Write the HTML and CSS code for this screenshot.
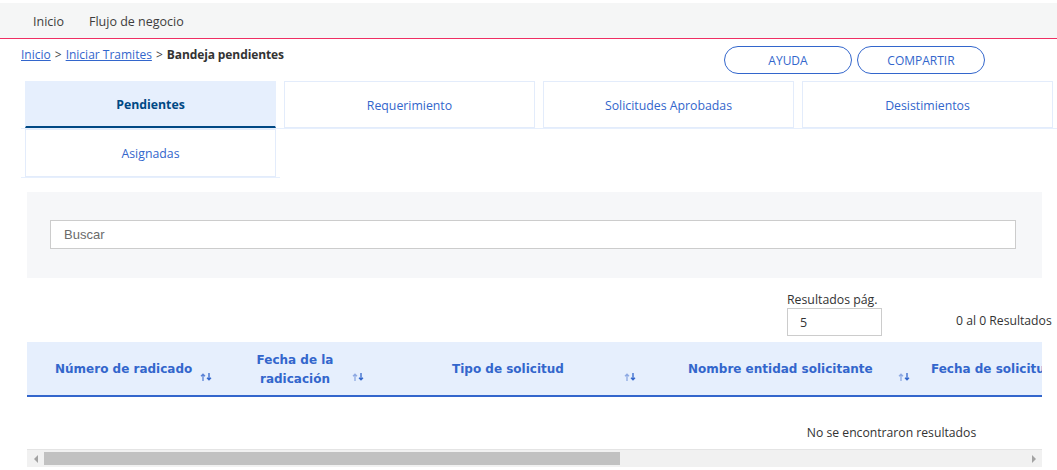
FILE: index.html
```html
<!DOCTYPE html>
<html lang="es">
<head>
<meta charset="utf-8">
<title>Bandeja pendientes</title>
<link rel="stylesheet" href="styles.css">
</head>
<body>
<nav class="topnav">
  <a class="topnav-item">Inicio</a>
  <a class="topnav-item">Flujo de negocio</a>
</nav>

<div class="headrow">
  <div class="crumbs">
    <a class="crumb-link" href="#">Inicio</a><span class="crumb-sep">&gt;</span><a class="crumb-link" href="#">Iniciar Tramites</a><span class="crumb-sep">&gt;</span><span class="crumb-current">Bandeja pendientes</span>
  </div>
  <div class="btns">
    <button class="pill">AYUDA</button>
    <button class="pill">COMPARTIR</button>
  </div>
</div>

<ul class="tabs">
  <li class="tab-li"><a class="tab tab-active">Pendientes</a></li>
  <li class="tab-li"><a class="tab">Requerimiento</a></li>
  <li class="tab-li"><a class="tab">Solicitudes Aprobadas</a></li>
  <li class="tab-li"><a class="tab">Desistimientos</a></li>
  <li class="tab-li"><a class="tab">Asignadas</a></li>
</ul>

<section class="search-panel">
  <input class="search-input" type="text" placeholder="Buscar">
</section>

<div class="results-row">
  <label class="per-page">
    <span class="per-page-label">Resultados pág.</span>
    <input class="per-page-input" type="text" value="5">
  </label>
  <span class="count">0 al 0 Resultados</span>
</div>

<div class="table-wrap">
  <div class="tscroll">
    <table class="grid">
      <colgroup>
        <col class="w1"><col class="w2"><col class="w3"><col class="w4"><col class="w5"><col class="w6"><col class="w7">
      </colgroup>
      <thead>
        <tr>
          <th class="c1"><div class="th-in"><span class="lbl">Número de radicado</span><svg class="sort sort-1" width="13" height="8" viewBox="0 0 13 8"><path class="up" d="M3 8V1.2M1 3.2L3 1.2L5 3.2"/><path class="down" d="M9 0V6.8M7 4.8L9 6.8L11 4.8"/></svg></div></th>
          <th class="c2"><div class="th-in"><span class="lbl lbl-2">Fecha de la<br>radicación</span><svg class="sort" width="13" height="8" viewBox="0 0 13 8"><path class="up" d="M3 8V1.2M1 3.2L3 1.2L5 3.2"/><path class="down" d="M9 0V6.8M7 4.8L9 6.8L11 4.8"/></svg></div></th>
          <th class="c3"><div class="th-in"><span class="lbl">Tipo de solicitud</span><svg class="sort" width="13" height="8" viewBox="0 0 13 8"><path class="up" d="M3 8V1.2M1 3.2L3 1.2L5 3.2"/><path class="down" d="M9 0V6.8M7 4.8L9 6.8L11 4.8"/></svg></div></th>
          <th class="c4"><div class="th-in"><span class="lbl">Nombre entidad solicitante</span><svg class="sort" width="13" height="8" viewBox="0 0 13 8"><path class="up" d="M3 8V1.2M1 3.2L3 1.2L5 3.2"/><path class="down" d="M9 0V6.8M7 4.8L9 6.8L11 4.8"/></svg></div></th>
          <th class="c5"><div class="th-in"><span class="lbl">Fecha de solicitud</span><svg class="sort" width="13" height="8" viewBox="0 0 13 8"><path class="up" d="M3 8V1.2M1 3.2L3 1.2L5 3.2"/><path class="down" d="M9 0V6.8M7 4.8L9 6.8L11 4.8"/></svg></div></th>
          <th class="c6"><div class="th-in"><span class="lbl">Estado</span><svg class="sort" width="13" height="8" viewBox="0 0 13 8"><path class="up" d="M3 8V1.2M1 3.2L3 1.2L5 3.2"/><path class="down" d="M9 0V6.8M7 4.8L9 6.8L11 4.8"/></svg></div></th>
          <th class="c7"><div class="th-in"><span class="lbl">Acciones</span></div></th>
        </tr>
      </thead>
      <tbody>
        <tr>
          <td class="empty" colspan="7">No se encontraron resultados</td>
        </tr>
      </tbody>
    </table>
  </div>
  <div class="hscroll">
    <span class="hs-btn"><span class="arrow-left"></span></span>
    <span class="hs-track"><span class="hs-thumb"></span></span>
    <span class="hs-btn"><span class="arrow-right"></span></span>
  </div>
</div>
</body>
</html>
```

FILE: styles.css
```css
* { box-sizing: border-box; }

html, body {
  margin: 0;
  padding: 0;
  background: #ffffff;
  overflow: hidden;
}

body {
  font-family: "Open Sans", "Noto Sans", sans-serif;
  font-size: 12.5px;
  color: #333333;
  width: 1057px;
  height: 470px;
}

/* ---------- top nav ---------- */
.topnav {
  margin-top: 3px;
  height: 36px;
  background: #f5f6f6;
  border-bottom: 1px solid #ef2f63;
  display: flex;
  align-items: center;
  gap: 25px;
  padding-left: 33px;
  padding-top: 1px;
}

.topnav-item {
  color: #3d3d3d;
  font-size: 12.5px;
  text-decoration: none;
}

/* ---------- breadcrumb row ---------- */
.headrow {
  display: flex;
  align-items: flex-start;
  height: 42px;
  padding-left: 21px;
}

.crumbs {
  padding-top: 8px;
  line-height: 16px;
  font-size: 12px;
}

.crumb-link {
  color: #3366cc;
  text-decoration: underline;
}

.crumb-sep {
  color: #444;
  margin: 0 4px;
}

.crumb-current {
  font-weight: 700;
  color: #333333;
  letter-spacing: -0.1px;
}

.btns {
  margin-left: auto;
  margin-right: 72px;
  margin-top: 7px;
  display: flex;
  gap: 5px;
}

.pill {
  width: 128px;
  height: 28px;
  border: 1px solid #3366cc;
  border-radius: 14px;
  background: #ffffff;
  color: #3366cc;
  font-family: "Open Sans", "Noto Sans", sans-serif;
  font-size: 12px;
  padding: 0;
}

/* ---------- tabs ---------- */
.tabs {
  list-style: none;
  margin: 0 0 0 21px;
  padding: 0;
  width: 1036px;
  display: flex;
  flex-wrap: wrap;
}

.tab-li {
  flex: 0 0 25%;
  padding: 0 4px;
  border-bottom: 1px solid #e6effd;
}

.tab {
  display: flex;
  align-items: center;
  justify-content: center;
  height: 47px;
  padding-top: 1px;
  border: 1px solid #e3ecfb;
  color: #3366cc;
  font-size: 12.3px;
  background: #ffffff;
}

.tab-active {
  background: #e6effd;
  border-color: #e6effd;
  border-bottom: 2px solid #004884;
  color: #004884;
  font-weight: 700;
}

.tab-li:nth-child(5) .tab {
  height: 48px;
}

/* ---------- search ---------- */
.search-panel {
  margin: 14px 15px 0 27px;
  background: #f6f7f9;
  padding: 28px 26px 29px 23px;
}

.search-input {
  display: block;
  width: 100%;
  height: 29px;
  border: 1px solid #cccccc;
  background: #ffffff;
  padding: 0 13px;
  font-family: "Liberation Sans", Arial, sans-serif;
  font-size: 13px;
  color: #333;
  outline: none;
}

.search-input::placeholder {
  color: #6b6b6b;
}

/* ---------- results row ---------- */
.results-row {
  display: flex;
  align-items: flex-end;
  height: 64px;
  padding-bottom: 6px;
  padding-left: 787px;
}

.per-page {
  display: flex;
  flex-direction: column;
  width: 104px;
}

.per-page-label {
  font-size: 12.3px;
  line-height: 17px;
  padding-top: 1px;
  color: #333;
  white-space: nowrap;
}

.per-page-input {
  width: 95px;
  height: 28px;
  border: 1px solid #cccccc;
  padding: 0 12px;
  font-family: "Open Sans", "Noto Sans", sans-serif;
  font-size: 12.5px;
  color: #333;
  outline: none;
}

.count {
  margin-left: 65px;
  margin-bottom: 7px;
  font-size: 12.2px;
  color: #333;
  white-space: nowrap;
}

/* ---------- table ---------- */
.table-wrap {
  margin: 0 15px 0 27px;
}

.tscroll {
  overflow: hidden;
}

.grid {
  width: 1729px;
  table-layout: fixed;
  border-collapse: collapse;
}

.w1 { width: 206px; }
.w2 { width: 175px; }
.w3 { width: 250px; }
.w4 { width: 257px; }
.w5 { width: 260px; }
.w6 { width: 290px; }
.w7 { width: 291px; }

.grid th {
  height: 54px;
  padding: 0;
  background: #e6effd;
  border-bottom: 2px solid #3366cc;
  font-family: "DejaVu Sans", "Liberation Sans", sans-serif;
  font-size: 12px;
  font-weight: 700;
  color: #3366cc;
  text-align: left;
  vertical-align: middle;
  white-space: nowrap;
}

.th-in {
  display: flex;
  align-items: center;
  padding-top: 2px;
}

.lbl {
  line-height: 19px;
}

.lbl-2 {
  width: 100px;
  text-align: center;
}

.sort {
  flex: 0 0 auto;
  margin-top: 14px;
  fill: none;
  stroke-width: 1.3;
}

.sort .up { stroke: #8ea9e3; }
.sort .down { stroke: #3366cc; }
.sort-1 .up { stroke: #5a82d6; }

.c1 .th-in { padding-left: 28px; }
.c1 .sort { margin-left: 8px; }

.c2 .th-in { padding-left: 12px; }
.c2 .sort { margin-left: 7px; }

.c3 .th-in { padding-left: 44px; }
.c3 .sort { margin-left: 60px; }

.c4 .th-in { padding-left: 30px; }
.c4 .sort { margin-left: 25px; }

.c5 .th-in { padding-left: 16px; }
.c5 .sort { margin-left: 20px; }

.c6 .th-in { padding-left: 40px; }
.c6 .sort { margin-left: 20px; }

.c7 .th-in { padding-left: 40px; }

.empty {
  padding: 27px 0 7px;
  text-align: center;
  font-size: 12.2px;
  line-height: 18px;
  color: #333;
  border-bottom: 1px solid #e4e4e4;
}

/* ---------- horizontal scrollbar ---------- */
.hscroll {
  display: flex;
  height: 17px;
  background: #f1f1f1;
}

.hs-btn {
  flex: 0 0 17px;
  display: flex;
  align-items: center;
  justify-content: center;
}

.arrow-left {
  width: 0;
  height: 0;
  border-top: 4px solid transparent;
  border-bottom: 4px solid transparent;
  border-right: 4px solid #a3a3a3;
}

.arrow-right {
  width: 0;
  height: 0;
  border-top: 4px solid transparent;
  border-bottom: 4px solid transparent;
  border-left: 4px solid #a3a3a3;
}

.hs-track {
  flex: 1 1 auto;
  padding: 2px 0;
  display: flex;
}

.hs-thumb {
  width: 576px;
  background: #c1c1c1;
}
```
